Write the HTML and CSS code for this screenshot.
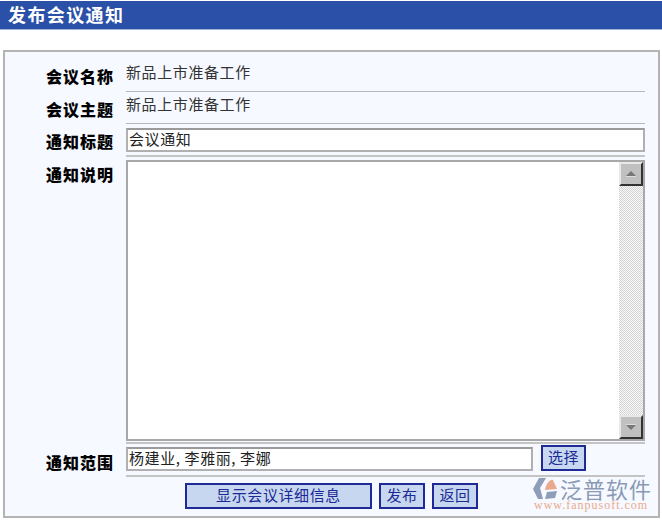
FILE: index.html
```html
<!DOCTYPE html>
<html lang="zh">
<head>
<meta charset="utf-8">
<title>发布会议通知</title>
<link rel="stylesheet" href="styles.css">
</head>
<body>
<header class="titlebar">发布会议通知</header>
<main class="panel">
  <div class="row row-text first">
    <div class="label">会议名称</div>
    <div class="field"><span class="value">新品上市准备工作</span></div>
  </div>
  <div class="row row-text second">
    <div class="label">会议主题</div>
    <div class="field"><span class="value">新品上市准备工作</span></div>
  </div>
  <div class="row row-input">
    <div class="label">通知标题</div>
    <div class="field"><div class="input">会议通知</div></div>
  </div>
  <div class="row row-area">
    <div class="label">通知说明</div>
    <div class="field">
      <div class="textarea">
        <div class="scrollbar">
          <div class="sb-btn"><svg width="10" height="6" viewBox="0 0 10 6"><path d="M5 0L10 5H0Z" fill="#777"/><path d="M0 5.5H10" stroke="#ddd"/></svg></div>
          <div class="sb-track"></div>
          <div class="sb-btn"><svg width="10" height="6" viewBox="0 0 10 6"><path d="M0 1H10L5 6Z" fill="#777"/><path d="M0 .5H10" stroke="#ddd"/></svg></div>
        </div>
      </div>
    </div>
  </div>
  <div class="row row-range">
    <div class="label">通知范围</div>
    <div class="field range">
      <div class="input input-range">杨建业, 李雅丽, 李娜</div>
      <div class="btn btn-pick">选择</div>
    </div>
  </div>
  <div class="actions">
    <div class="btn btn-wide">显示会议详细信息</div>
    <div class="btn btn-small">发布</div>
    <div class="btn btn-small">返回</div>
  </div>
</main>
<div class="logo">
  <svg class="logo-mark" width="28" height="26" viewBox="0 0 28 26">
    <path d="M2 13L8 2H15L9 12L12 23H7Z" fill="#8e9db8"/>
    <path d="M14 14C15 8 19 3 22 4L26 13Z" fill="#e9a98c"/>
    <path d="M14 23L16 16L26 15L24 22Z" fill="#8e9db8"/>
  </svg>
  <div class="logo-text">
    <div class="logo-name">泛普软件</div>
    <div class="logo-url">www.fanpusoft.com</div>
  </div>
</div>
</body>
</html>
```
FILE: styles.css
```css
html, body { margin: 0; padding: 0; background: #fff; }
body {
  position: relative;
  width: 662px;
  height: 521px;
  overflow: hidden;
  font-family: "Noto Sans CJK SC", "Liberation Sans", sans-serif;
  font-size: 15px;
  letter-spacing: .6px;
  color: #222;
}
.titlebar {
  margin-top: 1px;
  height: 29px;
  box-sizing: border-box;
  padding-left: 8px;
  line-height: 27px;
  background: #2a50a8;
  border-bottom: 1px solid #9fb0d8;
  color: #fff;
  font-size: 18px;
  letter-spacing: 1.4px;
  font-weight: 700;
}
.panel {
  margin: 20px 2px 0 3px;
  height: 468px;
  box-sizing: border-box;
  border: 2px solid #b4b4b4;
  background: #f6f9ff;
  padding-top: 7px;
}
.row {
  display: grid;
  grid-template-columns: 108px 519px;
  column-gap: 13px;
}
.label {
  text-align: right;
  font-weight: 900;
  color: #000;
  font-size: 16px;
  letter-spacing: 1px;
  margin-right: -1px;
  line-height: 20px;
}
.field { box-sizing: border-box; border-bottom: 2px solid #c4c4c4; }
.row-text .field { height: 100%; border-bottom-width: 1px; border-bottom-color: #b8b8b8; }
.row-text.first { height: 33px; }
.row-text.second { height: 32px; }
.row-text .label { padding-top: 7px; }
.value { display: block; line-height: 20px; padding-top: 3px; color: #333; }
.row-text.second .value { padding-top: 2px; }
.row-input { height: 32px; margin-top: 4px; }
.row-input .label { padding-top: 3px; }
.row-input .field { height: 29px; }
.input {
  box-sizing: border-box;
  height: 24px;
  border: 2px solid #b0b0b0;
  border-top-color: #9a9a9a;
  background: #fff;
  padding-left: 1px;
  line-height: 18px;
  color: #222;
}
.row-area { height: 287px; }
.row-area .label { padding-top: 4px; }
.row-area .field { height: 284px; }
.textarea {
  box-sizing: border-box;
  height: 281px;
  border: 2px solid #a8a8a8;
  background: #fff;
  display: flex;
  justify-content: flex-end;
}
.scrollbar { width: 24px; display: flex; flex-direction: column; }
.sb-btn {
  flex: none;
  box-sizing: border-box;
  height: 24px;
  background: #c0c0c0;
  border: 2px solid;
  border-color: #e8e8e8 #333 #333 #e8e8e8;
  display: flex;
  align-items: center;
  justify-content: center;
}
.sb-track {
  flex: 1;
  background-image: repeating-conic-gradient(#d4d4d4 0 25%, #f8f8f8 0 50%);
  background-size: 2px 2px;
}
.row-range { height: 33px; }
.row-range .label { padding-top: 5px; }
.row-range .field { height: 30px; display: flex; align-items: flex-start; gap: 8px; }
.input-range { width: 407px; }
.btn {
  box-sizing: border-box;
  border: 2px solid #1f2a96;
  background: #c7d7ef;
  color: #1b2a96;
  text-align: center;
  line-height: 19px;
}
.btn-pick { width: 45px; height: 26px; margin-top: -2px; }
.actions {
  display: flex;
  gap: 7px;
  padding-left: 180px;
  margin-top: 3px;
}
.btn-wide { width: 187px; height: 26px; }
.btn-small { width: 46px; height: 26px; }
.logo {
  position: absolute;
  left: 531px;
  top: 476px;
  display: flex;
  gap: 1px;
}
.logo-text { color: #8a9ab5; }
.logo-name { font-size: 22px; line-height: 24px; letter-spacing: 1px; font-weight: 400; white-space: nowrap; }
.logo-url { font-family: "Liberation Serif", serif; font-size: 12px; line-height: 10px; letter-spacing: 1px; color: #eba98c; white-space: nowrap; margin-left: -26px; }
```
